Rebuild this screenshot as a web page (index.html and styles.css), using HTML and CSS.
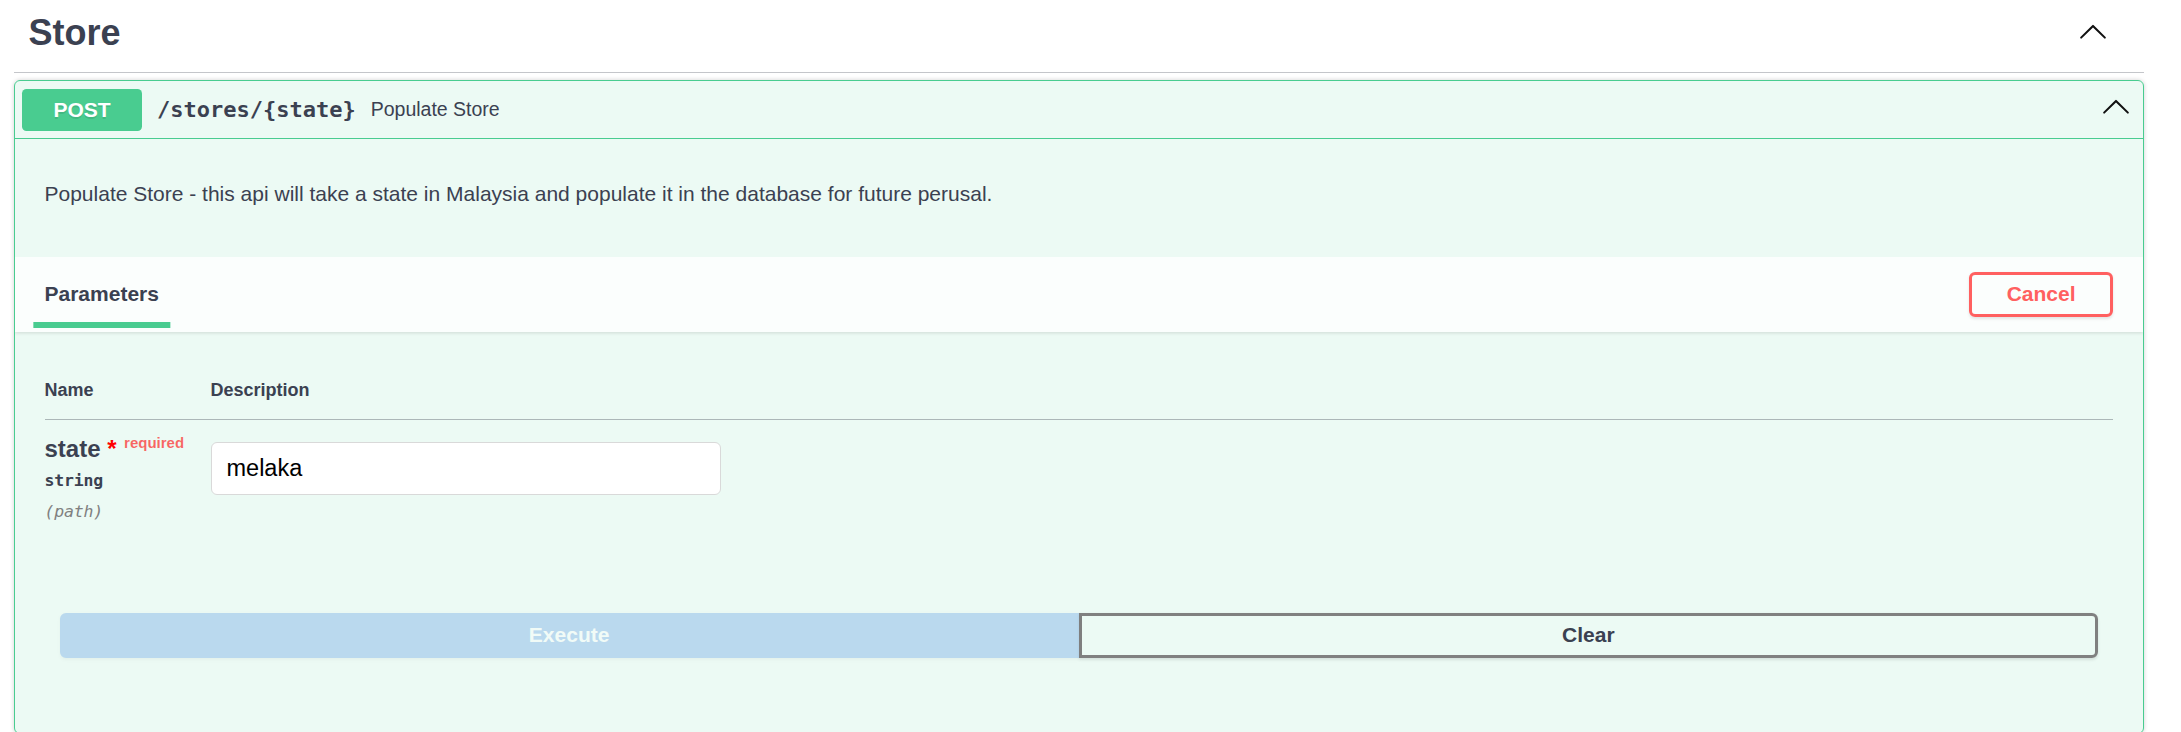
FILE: index.html
```html
<!DOCTYPE html>
<html lang="en">
<head>
<meta charset="utf-8">
<title>Store</title>
<link rel="stylesheet" href="styles.css">
</head>
<body>
<div class="page">
  <section class="tag-section">
    <h3 class="tag">
      <a class="tag-link"><span>Store</span></a>
      <button class="expand" aria-label="Collapse operation">
        <svg class="chevron" viewBox="0 0 20 20" width="30" height="30"><path d="M17.418 14.908c.271.268.709.268.979 0s.271-.701 0-.969l-7.908-7.83a.697.697 0 0 0-.979 0l-7.908 7.83c-.27.268-.27.701 0 .969.271.268.709.268.979 0L10 7.739l7.418 7.169z"/></svg>
      </button>
    </h3>

    <div class="opblock">
      <div class="summary">
        <span class="method">POST</span>
        <span class="path">/stores/{state}</span>
        <span class="summary-desc">Populate Store</span>
        <svg class="chevron summary-arrow" viewBox="0 0 20 20" width="30" height="30"><path d="M17.418 14.908c.271.268.709.268.979 0s.271-.701 0-.969l-7.908-7.83a.697.697 0 0 0-.979 0l-7.908 7.83c-.27.268-.27.701 0 .969.271.268.709.268.979 0L10 7.739l7.418 7.169z"/></svg>
      </div>

      <div class="body">
        <div class="description">
          <p>Populate Store - this api will take a state in Malaysia and populate it in the database for future perusal.</p>
        </div>

        <div class="section-header">
          <div class="tab"><h4><span class="tab-label">Parameters</span></h4></div>
          <button class="btn cancel">Cancel</button>
        </div>

        <div class="table-container">
          <table class="params">
            <thead>
              <tr><th class="col-name">Name</th><th class="col-desc">Description</th></tr>
            </thead>
            <tbody>
              <tr>
                <td class="col-name">
                  <div class="param-name required">state<span class="star">&nbsp;*</span></div>
                  <div class="param-type">string</div>
                  <div class="param-in">(path)</div>
                </td>
                <td class="col-desc">
                  <input class="text-input" type="text" value="melaka">
                </td>
              </tr>
            </tbody>
          </table>
        </div>

        <div class="btn-group">
          <button class="btn execute" disabled>Execute</button>
          <button class="btn clear">Clear</button>
        </div>
      </div>
    </div>
  </section>
</div>
</body>
</html>
```

FILE: styles.css
```css
html, body {
  margin: 0;
  padding: 0;
  background: #ffffff;
}

body {
  overflow: hidden;
  font-family: "Liberation Sans", Arial, sans-serif;
  color: #3b4151;
}

.page {
  padding-left: 13.5px;
  width: 2130.5px;
}

/* ---------- tag header ---------- */
.tag {
  display: flex;
  align-items: center;
  margin: 0 0 7px;
  padding: 12px 36px 18px 15px;
  border-bottom: 1.5px solid rgba(59, 65, 81, 0.3);
  font-size: 36px;
  font-weight: 700;
  line-height: normal;
  color: #3b4151;
}

.tag-link {
  flex: 1;
  color: inherit;
  text-decoration: none;
}

.expand {
  display: flex;
  padding: 0;
  border: none;
  background: none;
  margin-bottom: 4px;
}

.chevron {
  display: block;
  fill: #111111;
}

/* ---------- operation block ---------- */
.opblock {
  border: 1.5px solid #49cc90;
  border-radius: 6px;
  background: rgba(73, 204, 144, 0.1);
  box-shadow: 0 0 4.5px rgba(0, 0, 0, 0.19);
  overflow: hidden;
}

.summary {
  display: flex;
  align-items: center;
  padding: 7.5px;
  border-bottom: 1.5px solid #49cc90;
}

.method {
  min-width: 120px;
  padding: 9px 0;
  border-radius: 4.5px;
  background: #49cc90;
  color: #ffffff;
  font-size: 21px;
  font-weight: 700;
  line-height: normal;
  text-align: center;
  text-shadow: 0 1.5px 0 rgba(0, 0, 0, 0.1);
}

.path {
  padding: 0 15px;
  font-family: "DejaVu Sans Mono", "Liberation Mono", monospace;
  font-size: 22px;
  font-weight: 700;
  color: #3b4151;
}

.summary-desc {
  flex: 1;
  font-size: 19.5px;
  color: #3b4151;
}

.summary-arrow {
  margin: 0 5px 8px 0;
}

/* ---------- body ---------- */
.description {
  padding: 39px 30px 47px;
}

.description p {
  margin: 0;
  font-size: 21px;
  line-height: 31.5px;
  color: #3b4151;
}

.section-header {
  display: flex;
  align-items: center;
  justify-content: space-between;
  min-height: 75px;
  box-sizing: border-box;
  padding: 12px 30px;
  background: rgba(255, 255, 255, 0.8);
  box-shadow: 0 1.5px 3px rgba(0, 0, 0, 0.1);
}

.tab h4 {
  margin: 0;
  font-size: 21px;
  font-weight: 700;
  color: #3b4151;
}

.tab-label {
  position: relative;
}

.tab-label::after {
  content: "";
  position: absolute;
  left: 50%;
  bottom: -22.5px;
  width: 120%;
  height: 6px;
  transform: translateX(-50%);
  background: #49cc90;
}

.btn {
  font-family: "Liberation Sans", Arial, sans-serif;
  font-size: 21px;
  font-weight: 700;
  line-height: normal;
  padding: 7.5px 34.5px;
  border: 3px solid #808080;
  border-radius: 6px;
  background: transparent;
  color: #3b4151;
  box-shadow: 0 1.5px 3px rgba(0, 0, 0, 0.1);
}

.btn.cancel {
  border-color: #ff6060;
  color: #ff6060;
}

/* ---------- parameters table ---------- */
.table-container {
  padding: 30px;
}

.params {
  width: 100%;
  border-collapse: collapse;
}

.params th {
  padding: 18px 0;
  border-bottom: 1.5px solid rgba(59, 65, 81, 0.2);
  font-size: 18px;
  font-weight: 700;
  line-height: normal;
  text-align: left;
  color: #3b4151;
}

.params th.col-name,
.params td.col-name {
  width: 166px;
}

.params td {
  padding: 15px 0 18px;
  vertical-align: top;
}

.param-name {
  font-size: 24px;
  font-weight: 400;
  line-height: normal;
  color: #3b4151;
}

.param-name.required {
  font-weight: 700;
}

.param-name .star {
  color: #ff0000;
}

.param-name.required::after {
  content: "required";
  position: relative;
  top: -9px;
  padding: 7.5px;
  font-size: 15px;
  color: rgba(255, 0, 0, 0.6);
}

.param-type {
  padding: 7.5px 0;
  font-family: "DejaVu Sans Mono", "Liberation Mono", monospace;
  font-size: 16.5px;
  font-weight: 700;
  line-height: 21px;
  letter-spacing: -0.2px;
  color: #3b4151;
}

.param-in {
  padding-top: 2px;
  font-family: "DejaVu Sans Mono", "Liberation Mono", monospace;
  font-size: 16.5px;
  font-style: italic;
  line-height: 21px;
  letter-spacing: -0.2px;
  color: #808080;
}

.text-input {
  display: block;
  box-sizing: border-box;
  width: 510px;
  height: 52.5px;
  margin: 7.5px 0;
  padding: 0 15px;
  border: 1.5px solid #d9d9d9;
  border-radius: 6px;
  background: #ffffff;
  font-family: "Liberation Sans", Arial, sans-serif;
  font-size: 23.5px;
  color: #000000;
}

/* ---------- buttons ---------- */
.btn-group {
  display: flex;
  padding: 43px 45px 75px;
}

.btn-group .btn {
  flex: 2;
}

.btn-group .btn:first-child {
  border-radius: 6px 0 0 6px;
}

.btn-group .btn:last-child {
  border-radius: 0 6px 6px 0;
}

.btn.execute {
  background: #4990e2;
  border-color: #4990e2;
  color: #ffffff;
  opacity: 0.3;
}
```
